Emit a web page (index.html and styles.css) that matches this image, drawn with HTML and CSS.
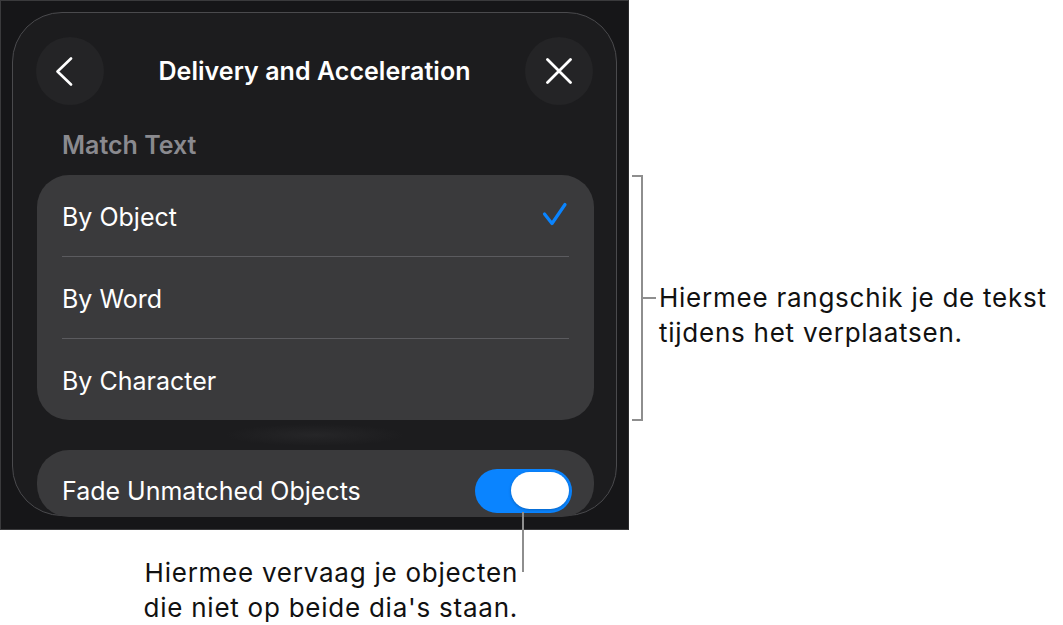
FILE: index.html
```html
<!DOCTYPE html>
<html lang="nl">
<head>
<meta charset="utf-8">
<title>Delivery and Acceleration</title>
<link rel="stylesheet" href="styles.css">
</head>
<body>
<div class="figure">
  <div class="top">
    <div class="screen">
      <div class="sheet">
        <div class="header">
          <button class="circle-btn" aria-label="Back">
            <svg width="24" height="30" viewBox="0 0 24 30"><polyline points="15,2.5 1.5,15.5 15,28.5" fill="none" stroke="#fff" stroke-width="2.6" stroke-linecap="round" stroke-linejoin="round"/></svg>
          </button>
          <div class="title">Delivery and Acceleration</div>
          <button class="circle-btn" aria-label="Close">
            <svg width="26" height="26" viewBox="0 0 26 26"><path d="M1.5 1.5 L24.5 24.5 M24.5 1.5 L1.5 24.5" fill="none" stroke="#fff" stroke-width="2.8" stroke-linecap="round"/></svg>
          </button>
        </div>
        <div class="section-label">Match Text</div>
        <div class="card">
          <div class="row"><span>By Object</span>
            <svg class="check" width="26" height="24" viewBox="0 0 26 24"><polyline points="2.5,12 10,21.5 23,2.5" fill="none" stroke="#0a84ff" stroke-width="3.2" stroke-linecap="round" stroke-linejoin="round"/></svg>
          </div>
          <div class="sep"></div>
          <div class="row"><span>By Word</span></div>
          <div class="sep"></div>
          <div class="row"><span>By Character</span></div>
        </div>
        <div class="gap"><div class="glow"></div></div>
        <div class="card fade-card">
          <span>Fade Unmatched Objects</span>
          <div class="toggle"><div class="knob"></div></div>
        </div>
      </div>
    </div>
    <div class="callout-right">
      <div class="bracket"></div>
      <div class="arm-row">
        <div class="tick"></div>
        <div class="note">Hiermee rangschik je de tekst<br>tijdens het verplaatsen.</div>
      </div>
    </div>
  </div>
  <div class="note bottom-note">Hiermee vervaag je objecten<br>die niet op beide dia's staan.</div>
  <div class="leader"></div>
</div>
</body>
</html>
```

FILE: styles.css
```css
* { box-sizing: border-box; }
html, body { margin: 0; padding: 0; background: #ffffff; }
body { font-family: Inter, "Noto Sans", "Liberation Sans", sans-serif; }

.figure { position: relative; width: 1063px; height: 625px; }
.top { display: flex; align-items: flex-start; }

.screen {
  width: 629px;
  height: 530px;
  background: #161618;
  border: 1px solid #3a3a3c;
  border-right-color: #2a2a2c;
  overflow: hidden;
  padding: 11px 0 0 11px;
}

.sheet {
  width: 605px;
  height: 504px;
  background: #1c1c1e;
  border: 1px solid #4a4a4d;
  border-radius: 50px;
}

.header {
  display: flex;
  align-items: center;
  justify-content: space-between;
  padding: 24px 23px 0 23px;
}
.circle-btn {
  width: 68px;
  height: 68px;
  border-radius: 50%;
  border: none;
  background: #242426;
  display: flex;
  align-items: center;
  justify-content: center;
  padding: 0;
}
.circle-btn:first-child svg { margin-left: -4px; }
.title {
  color: #ffffff;
  font-size: 25px;
  font-weight: 600;
  letter-spacing: 0.05px;
}

.section-label {
  margin: 26px 0 0 49px;
  color: #8a8a8f;
  font-size: 25px;
  font-weight: 600;
  line-height: 28px;
}

.card {
  margin: 16px 22px 0 24px;
  background: #3a3a3c;
  border-radius: 32px;
  color: #ffffff;
  font-size: 25px;
}
.row {
  height: 81px;
  display: flex;
  align-items: center;
  justify-content: space-between;
  padding: 2px 26px 0 25px;
}
.check { margin-top: -6px; }
.sep { height: 1px; margin: 0 25px; background: #5b5b5f; }

.gap { height: 30px; display: flex; justify-content: center; align-items: center; }
.glow {
  width: 180px;
  height: 22px;
  background: radial-gradient(ellipse at center, rgba(56,56,58,0.35) 0%, rgba(40,40,42,0) 70%);
}

.fade-card {
  margin-top: 0;
  height: 67px;
  display: flex;
  align-items: center;
  justify-content: space-between;
  padding: 14px 22px 0 25px;
}
.toggle {
  width: 97px;
  height: 44px;
  border-radius: 22px;
  background: #0a84ff;
  display: flex;
  align-items: center;
  justify-content: flex-end;
  padding-right: 3px;
}
.knob {
  width: 58px;
  height: 37px;
  border-radius: 19px;
  background: #ffffff;
  box-shadow: 0 1px 3px rgba(0,0,0,0.25);
}

.callout-right {
  display: flex;
  align-items: flex-start;
  margin: 175px 0 0 3px;
}
.bracket {
  width: 11px;
  height: 246px;
  border: 2px solid #8e8e8e;
  border-left: none;
}
.arm-row {
  display: flex;
  align-items: flex-start;
  margin-top: 105px;
}
.tick { width: 13px; height: 2px; background: #8e8e8e; margin-top: 17px; }

.note {
  color: #111111;
  font-size: 26px;
  line-height: 35px;
  letter-spacing: 0.75px;
  font-family: Inter, "Liberation Sans", sans-serif;
  white-space: nowrap;
}
.callout-right .note { margin-left: 3px; }

.bottom-note {
  width: 518px;
  text-align: right;
  margin-top: 25px;
}

.leader {
  position: absolute;
  left: 522px;
  top: 512px;
  width: 2px;
  height: 60px;
  background: #8e8e8e;
}
```
